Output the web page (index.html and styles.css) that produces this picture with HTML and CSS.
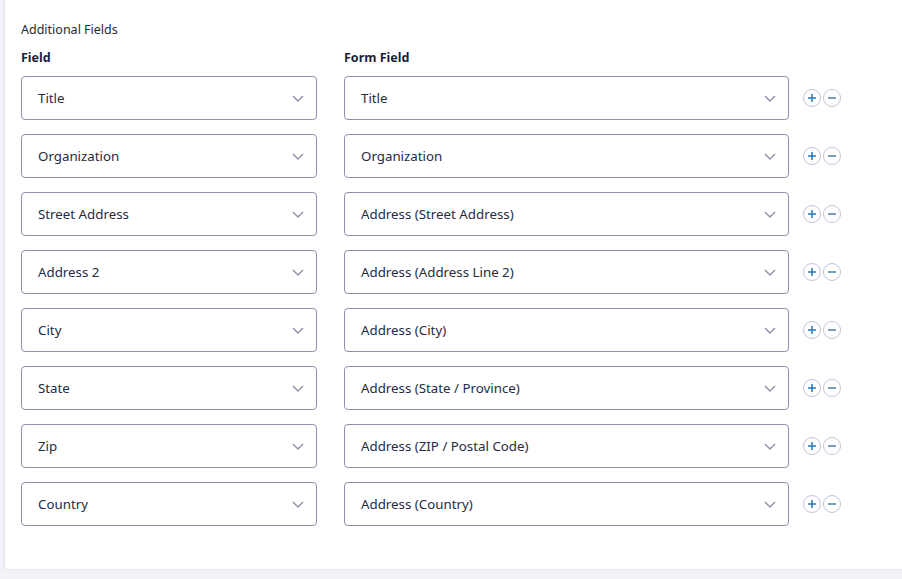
FILE: index.html
```html
<!DOCTYPE html>
<html>
<head>
<meta charset="utf-8">
<link rel="stylesheet" href="styles.css">
</head>
<body>
<div class="card">
  <div class="section-title">Additional Fields</div>
  <div class="grid">
    <div class="head">Field</div>
    <div class="head">Form Field</div>
    <div></div>

    <div class="sel"><span>Title</span><svg class="chev" viewBox="0 0 12 7"><path d="M1 1l5 5 5-5"/></svg></div>
    <div class="sel"><span>Title</span><svg class="chev" viewBox="0 0 12 7"><path d="M1 1l5 5 5-5"/></svg></div>
    <div class="btns"><span class="cb"><svg viewBox="0 0 18 18"><path class="plus" d="M9 4.5v9M4.5 9h9"/></svg></span><span class="cb"><svg viewBox="0 0 18 18"><path class="minus" d="M4.5 9h9"/></svg></span></div>

    <div class="sel"><span>Organization</span><svg class="chev" viewBox="0 0 12 7"><path d="M1 1l5 5 5-5"/></svg></div>
    <div class="sel"><span>Organization</span><svg class="chev" viewBox="0 0 12 7"><path d="M1 1l5 5 5-5"/></svg></div>
    <div class="btns"><span class="cb"><svg viewBox="0 0 18 18"><path class="plus" d="M9 4.5v9M4.5 9h9"/></svg></span><span class="cb"><svg viewBox="0 0 18 18"><path class="minus" d="M4.5 9h9"/></svg></span></div>

    <div class="sel"><span>Street Address</span><svg class="chev" viewBox="0 0 12 7"><path d="M1 1l5 5 5-5"/></svg></div>
    <div class="sel"><span>Address (Street Address)</span><svg class="chev" viewBox="0 0 12 7"><path d="M1 1l5 5 5-5"/></svg></div>
    <div class="btns"><span class="cb"><svg viewBox="0 0 18 18"><path class="plus" d="M9 4.5v9M4.5 9h9"/></svg></span><span class="cb"><svg viewBox="0 0 18 18"><path class="minus" d="M4.5 9h9"/></svg></span></div>

    <div class="sel"><span>Address 2</span><svg class="chev" viewBox="0 0 12 7"><path d="M1 1l5 5 5-5"/></svg></div>
    <div class="sel"><span>Address (Address Line 2)</span><svg class="chev" viewBox="0 0 12 7"><path d="M1 1l5 5 5-5"/></svg></div>
    <div class="btns"><span class="cb"><svg viewBox="0 0 18 18"><path class="plus" d="M9 4.5v9M4.5 9h9"/></svg></span><span class="cb"><svg viewBox="0 0 18 18"><path class="minus" d="M4.5 9h9"/></svg></span></div>

    <div class="sel"><span>City</span><svg class="chev" viewBox="0 0 12 7"><path d="M1 1l5 5 5-5"/></svg></div>
    <div class="sel"><span>Address (City)</span><svg class="chev" viewBox="0 0 12 7"><path d="M1 1l5 5 5-5"/></svg></div>
    <div class="btns"><span class="cb"><svg viewBox="0 0 18 18"><path class="plus" d="M9 4.5v9M4.5 9h9"/></svg></span><span class="cb"><svg viewBox="0 0 18 18"><path class="minus" d="M4.5 9h9"/></svg></span></div>

    <div class="sel"><span>State</span><svg class="chev" viewBox="0 0 12 7"><path d="M1 1l5 5 5-5"/></svg></div>
    <div class="sel"><span>Address (State / Province)</span><svg class="chev" viewBox="0 0 12 7"><path d="M1 1l5 5 5-5"/></svg></div>
    <div class="btns"><span class="cb"><svg viewBox="0 0 18 18"><path class="plus" d="M9 4.5v9M4.5 9h9"/></svg></span><span class="cb"><svg viewBox="0 0 18 18"><path class="minus" d="M4.5 9h9"/></svg></span></div>

    <div class="sel"><span>Zip</span><svg class="chev" viewBox="0 0 12 7"><path d="M1 1l5 5 5-5"/></svg></div>
    <div class="sel"><span>Address (ZIP / Postal Code)</span><svg class="chev" viewBox="0 0 12 7"><path d="M1 1l5 5 5-5"/></svg></div>
    <div class="btns"><span class="cb"><svg viewBox="0 0 18 18"><path class="plus" d="M9 4.5v9M4.5 9h9"/></svg></span><span class="cb"><svg viewBox="0 0 18 18"><path class="minus" d="M4.5 9h9"/></svg></span></div>

    <div class="sel"><span>Country</span><svg class="chev" viewBox="0 0 12 7"><path d="M1 1l5 5 5-5"/></svg></div>
    <div class="sel"><span>Address (Country)</span><svg class="chev" viewBox="0 0 12 7"><path d="M1 1l5 5 5-5"/></svg></div>
    <div class="btns"><span class="cb"><svg viewBox="0 0 18 18"><path class="plus" d="M9 4.5v9M4.5 9h9"/></svg></span><span class="cb"><svg viewBox="0 0 18 18"><path class="minus" d="M4.5 9h9"/></svg></span></div>
  </div>
</div>
</body>
</html>
```

FILE: styles.css
```css
html, body {
  margin: 0;
  padding: 0;
  background: #f1f3f9;
  font-family: "Noto Sans", "Open Sans", sans-serif;
  color: #1d2327;
}
.card {
  margin: -10px 0 0 4px;
  width: 889px;
  background: #fff;
  border: 1px solid #e3e6ef;
  border-radius: 0 0 4px 4px;
  box-shadow: 0 1px 2px rgba(30, 40, 90, 0.06);
  padding: 30px 0 43px 16px;
  box-sizing: content-box;
}
.section-title {
  font-size: 12.5px;
  line-height: 18px;
  color: #1f2a37;
}
.grid {
  margin-top: 10px;
  display: grid;
  grid-template-columns: 296px 445px auto;
  column-gap: 27px;
  row-gap: 14px;
  align-items: center;
}
.head {
  font-size: 12.5px;
  font-weight: 700;
  line-height: 18px;
  color: #1b1f3b;
  margin-bottom: -5px;
}
.sel {
  height: 44px;
  box-sizing: border-box;
  border: 1px solid #8f8fb0;
  border-radius: 4px;
  display: flex;
  align-items: center;
  justify-content: space-between;
  padding: 0 12px 0 16px;
  font-size: 13.3px;
  color: #262b3f;
}
.chev {
  width: 12px;
  height: 7px;
}
.chev path {
  fill: none;
  stroke: #8c8ea8;
  stroke-width: 1.4;
}
.btns {
  display: flex;
  gap: 2px;
  margin-left: -13px;
}
.cb {
  width: 18px;
  height: 18px;
  box-sizing: border-box;
  border: 1px solid #c3c4da;
  border-radius: 50%;
  display: flex;
  align-items: center;
  justify-content: center;
}
.cb svg {
  width: 16px;
  height: 16px;
}
.cb path {
  fill: none;
  stroke-width: 1.7;
}
.plus { stroke: #2878b4; }
.minus { stroke: #4b7ea8; }
```
